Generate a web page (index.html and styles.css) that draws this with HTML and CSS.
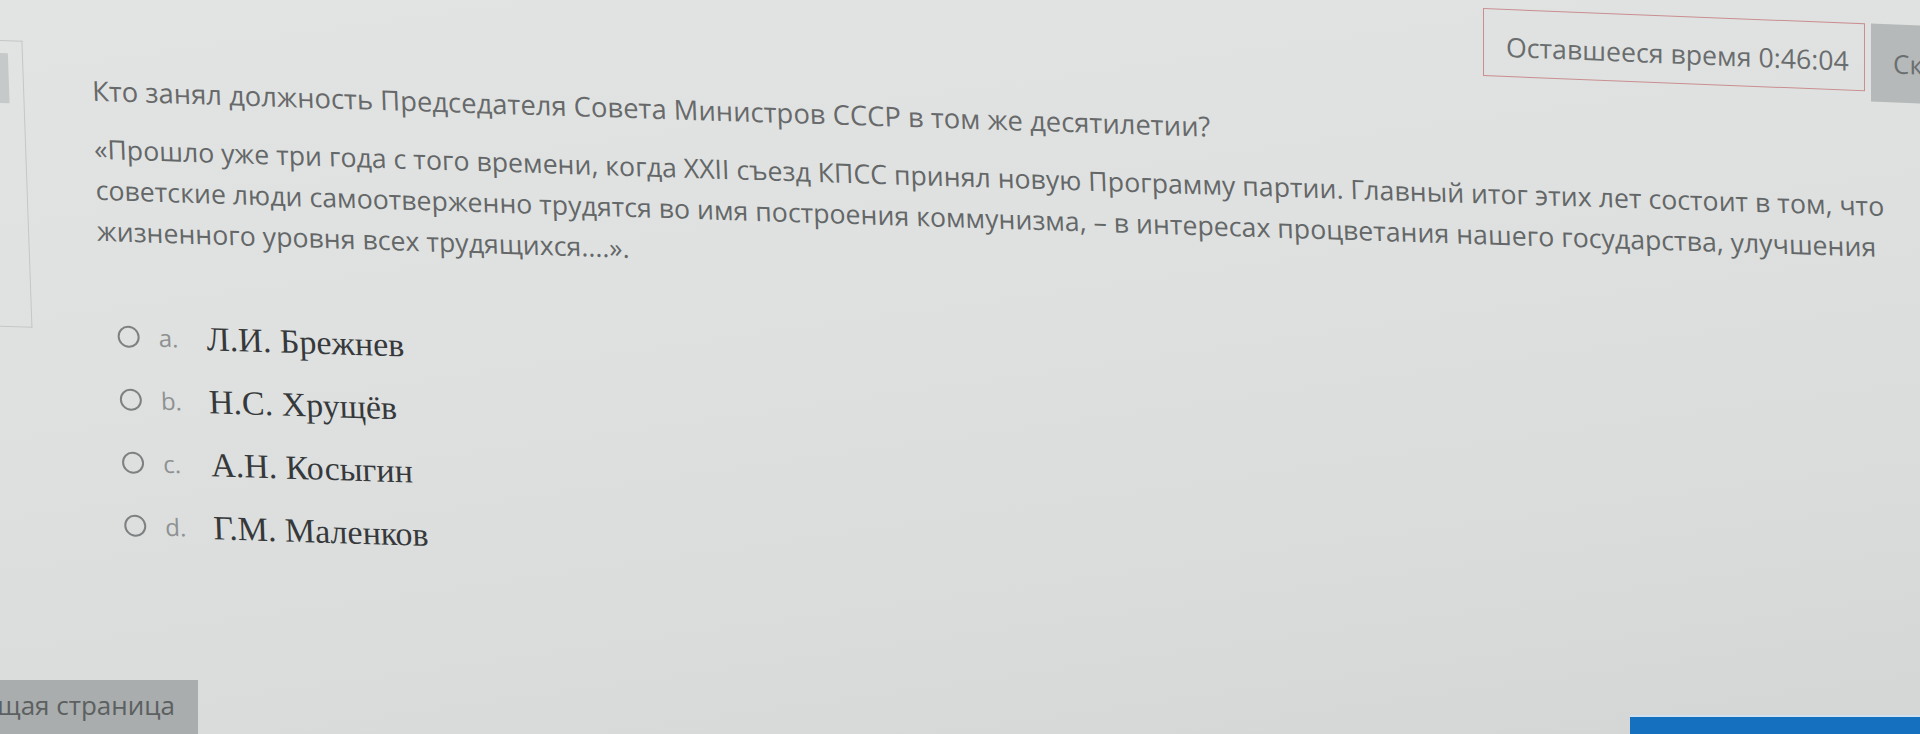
FILE: index.html
```html
<!DOCTYPE html>
<html lang="ru">
<head>
<meta charset="utf-8">
<title>Вопрос</title>
<link rel="stylesheet" href="styles.css">
</head>
<body>
<div class="page">
  <div class="topbar">
    <div class="timer">Оставшееся время 0:46:04</div>
    <button class="hide-btn">Скрыть</button>
  </div>
  <div class="sheet">
    <aside class="side-tab"><span class="side-flag"></span></aside>
    <section class="question">
      <p class="qtext">Кто занял должность Председателя Совета Министров СССР в том же десятилетии?</p>
      <p class="quote">«Прошло уже три года с того времени, когда XXII съезд КПСС принял новую Программу партии. Главный итог этих лет состоит в том, что советские люди самоотверженно трудятся во имя построения коммунизма, – в интересах процветания нашего государства, улучшения жизненного уровня всех трудящихся....».</p>
      <ul class="answers">
        <li class="answer"><span class="radio"></span><span class="letter">a.</span><span class="name">Л.И. Брежнев</span></li>
        <li class="answer"><span class="radio"></span><span class="letter">b.</span><span class="name">Н.С. Хрущёв</span></li>
        <li class="answer"><span class="radio"></span><span class="letter">c.</span><span class="name">А.Н. Косыгин</span></li>
        <li class="answer"><span class="radio"></span><span class="letter">d.</span><span class="name">Г.М. Маленков</span></li>
      </ul>
    </section>
  </div>
  <footer class="nav">
    <button class="prev-btn"><span>Предыдущая страница</span></button>
    <button class="next-btn"></button>
  </footer>
</div>
</body>
</html>
```
FILE: styles.css
```css
* { box-sizing: border-box; }
html, body { margin: 0; padding: 0; }
body {
  width: 1920px;
  height: 734px;
  overflow: hidden;
  font-family: "Open Sans", "Liberation Sans", sans-serif;
  background: linear-gradient(172deg, #e2e4e3 0%, #dfe1e0 40%, #d9dcdb 75%, #d3d6d5 100%);
  color: #6b6e6f;
}
.page {
  width: 1920px;
  height: 734px;
  display: grid;
  grid-template-columns: 1fr;
  grid-template-rows: 1fr auto;
}
.topbar {
  grid-row: 1;
  grid-column: 1;
  justify-self: end;
  align-self: start;
  display: flex;
  align-items: flex-start;
  gap: 6px;
  margin-top: 8px;
  transform: skewY(2.3deg);
  transform-origin: left top;
  z-index: 1;
}
.timer {
  width: 382px;
  height: 68px;
  border: 1.5px solid #c98e90;
  display: flex;
  align-items: center;
  padding: 6px 0 0 22px;
  font-size: 26.7px;
  color: #6a6d6e;
  white-space: nowrap;
}
.hide-btn {
  width: 49px;
  height: 78px;
  border: 0;
  background: #b6b9b9;
  color: #6c6f70;
  font-family: "Open Sans", "Liberation Sans", sans-serif;
  font-size: 26px;
  text-align: left;
  padding: 0 0 0 22px;
  overflow: hidden;
  white-space: nowrap;
}
.sheet {
  grid-row: 1;
  grid-column: 1;
  display: grid;
  grid-template-columns: 21px 1fr;
  align-items: start;
  transform: matrix(1, 0.032, 0.035, 1, 0, 0);
  transform-origin: 0 0;
}
.side-tab {
  margin-top: 40px;
  margin-left: -14px;
  height: 287px;
  border: 1.5px solid #c4c7c7;
  border-left: 0;
  display: flex;
  flex-direction: column;
  padding-top: 12px;
}
.side-flag {
  display: block;
  width: 20px;
  height: 50px;
  background: #c6c9c9;
}
.question {
  padding: 70px 24px 0 68px;
}
.qtext {
  margin: 0;
  font-size: 27.4px;
  line-height: 36px;
  color: #67696a;
}
.quote {
  margin: 19px 0 0;
  font-size: 26.7px;
  line-height: 41px;
  color: #646768;
}
.answers {
  list-style: none;
  margin: 53px 0 0;
  padding: 0 0 0 17px;
}
.answer {
  height: 63px;
  display: flex;
  align-items: center;
}
.radio {
  width: 22px;
  height: 22px;
  border: 2.5px solid #7e8182;
  border-radius: 50%;
  flex: none;
}
.letter {
  width: 67px;
  padding-left: 19px;
  font-size: 24px;
  color: #8e9192;
  flex: none;
}
.name {
  font-family: "Liberation Serif", "Times New Roman", serif;
  font-size: 34px;
  color: #36393b;
}
.nav {
  grid-row: 2;
  display: flex;
  justify-content: space-between;
  align-items: flex-end;
}
.prev-btn {
  width: 198px;
  height: 54px;
  border: 0;
  background: #a9adad;
  color: #5c6061;
  font-family: "Open Sans", "Liberation Sans", sans-serif;
  font-size: 26px;
  display: flex;
  justify-content: flex-end;
  align-items: center;
  padding: 0 23px 4px 0;
  overflow: hidden;
  white-space: nowrap;
}
.next-btn {
  width: 290px;
  height: 19px;
  border: 0;
  border-top: 2px solid #cfe0ee;
  background: #1670c0;
  padding: 0;
}
```
